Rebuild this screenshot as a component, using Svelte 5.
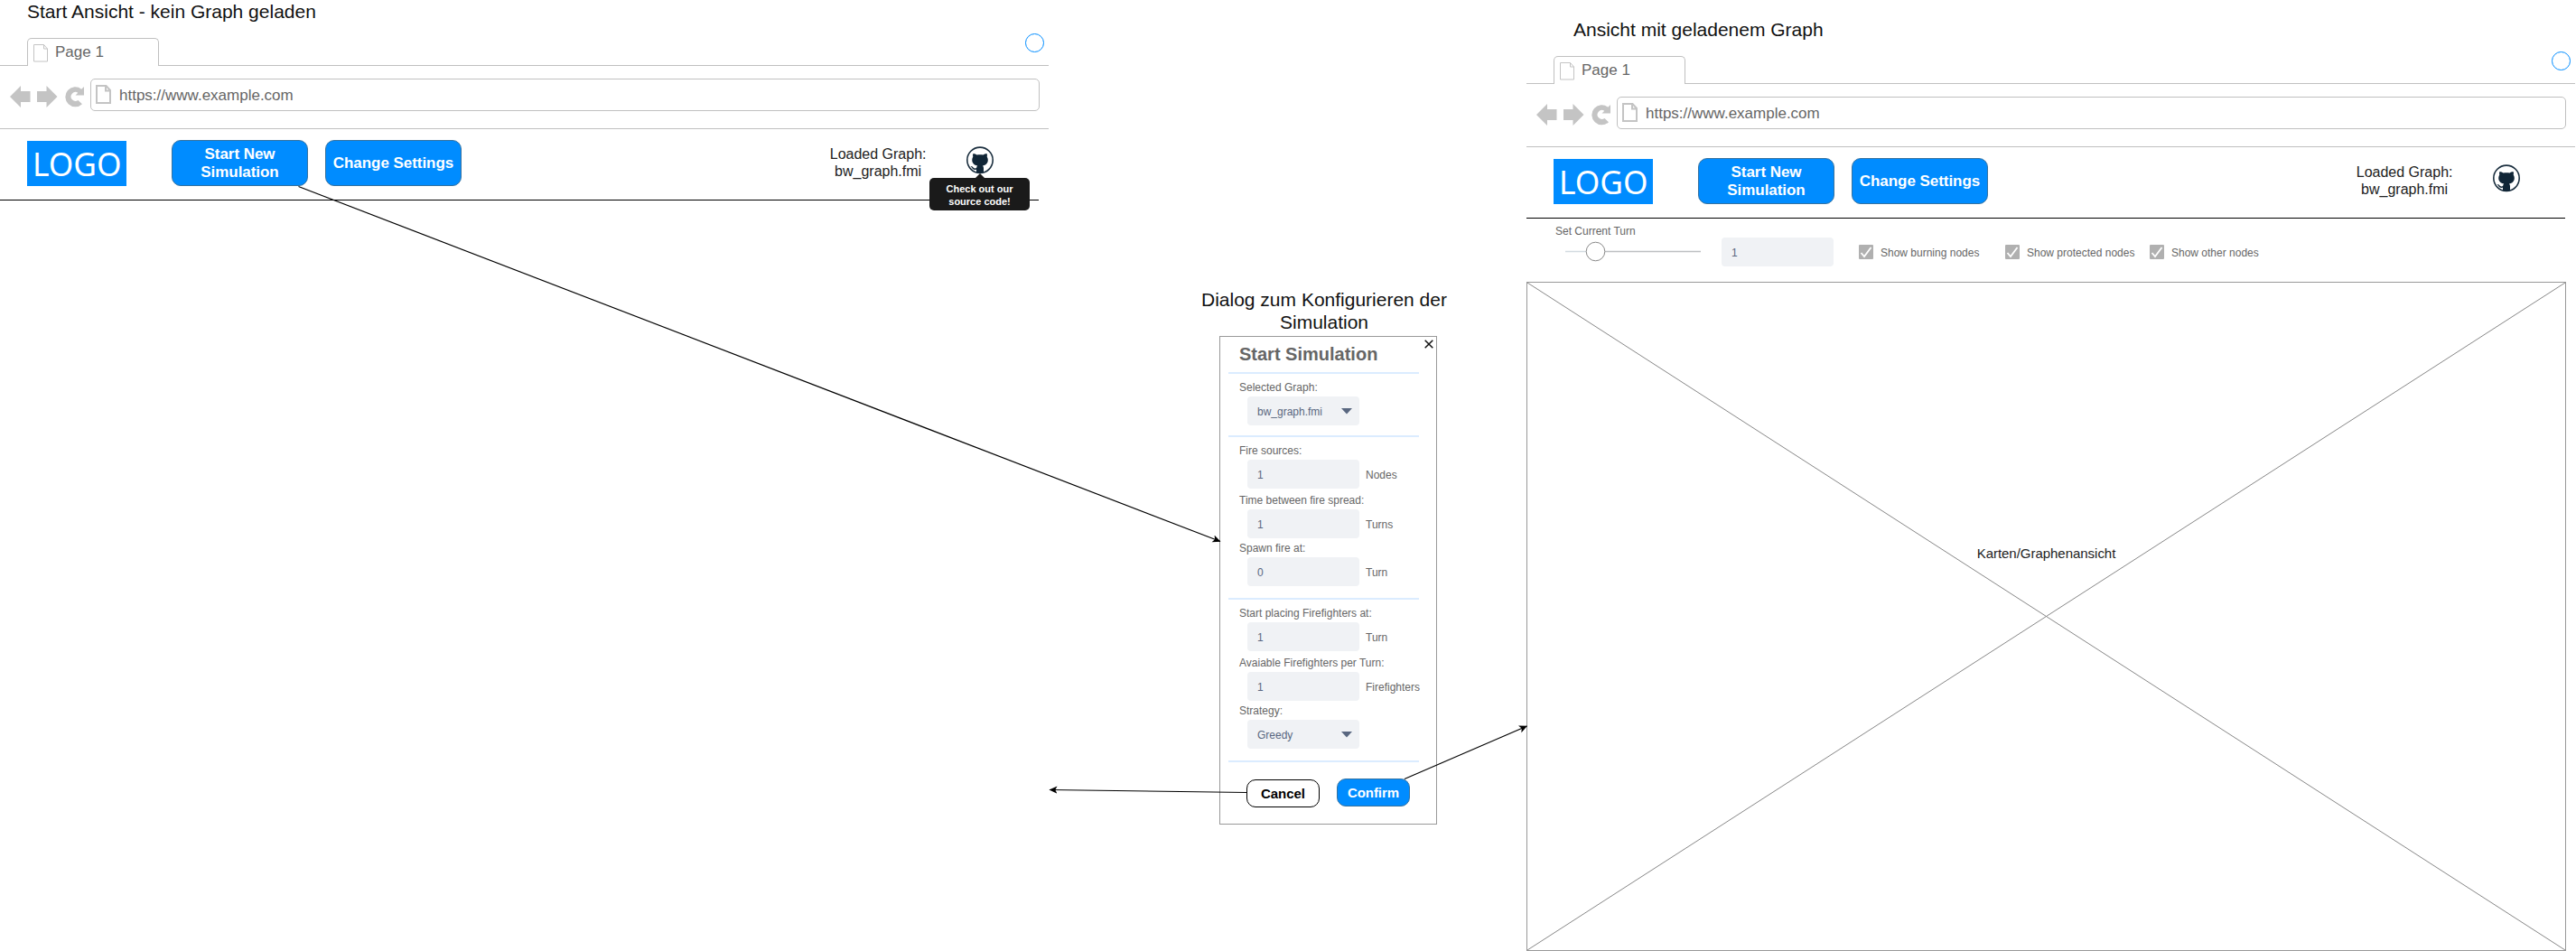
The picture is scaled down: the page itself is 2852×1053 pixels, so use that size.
<script>
  const fireRows = [
    { label: 'Fire sources:', value: '1', unit: 'Nodes', size: 'r55' },
    { label: 'Time between fire spread:', value: '1', unit: 'Turns', size: 'r53' },
    { label: 'Spawn fire at:', value: '0', unit: 'Turn', size: 'r53' }
  ];
  const fighterRows = [
    { label: 'Start placing Firefighters at:', value: '1', unit: 'Turn', size: 'r55' },
    { label: 'Avaiable Firefighters per Turn:', value: '1', unit: 'Firefighters', size: 'r53' }
  ];
  const checks = ['Show burning nodes', 'Show protected nodes', 'Show other nodes'];
</script>

{#snippet browser(title, tooltip)}
  <h1 class="title">{title}</h1>
  <div class="tabs">
    <div class="tab-lead"></div>
    <div class="tab">
      <svg width="17" height="20" viewBox="0 0 17 20"><path d="M.5.5h11l4 4.500v14h-15zM11.500.5v4.500h4" /></svg>
      <span>Page 1</span>
    </div>
    <div class="tab-rest"><i class="ring"></i></div>
  </div>
  <div class="address-row">
    <svg class="nav" width="84" height="26" viewBox="0 0 84 26">
      <path d="M0 13L12 1v6h10.500v12H12v6zM52.500 13L40.500 1v6H30v12h10.500v6z" />
      <path d="M82 2v9.500h-9.500l2.800-2.800a5 5 0 1 0 .2 8.300l4.500 4.200a11 11 0 1 1-.8-16.500z" />
    </svg>
    <div class="address">
      <svg width="18" height="22" viewBox="0 0 18 22"><path d="M1 1h10.500l4.500 5v14H1zM11 1v5.500h5" /></svg>
      <span>https://www.example.com</span>
    </div>
  </div>
  <header class="appbar">
    <div class="logo"><span>LOGO</span></div>
    <button class="action">Start New<br />Simulation</button>
    <button class="action second">Change Settings</button>
    <p class="loaded">Loaded Graph:<br />bw_graph.fmi</p>
    <div class="github">
      <svg width="30" height="31" viewBox="0 0 30 31">
        <circle cx="15" cy="15.300" r="14.200" fill="#fff" stroke="#1b2f3f" stroke-width="1.600" />
        <path fill="#102536" d="M7.500 8c1.500 0 3 .8 4 1.500 2.300-.5 4.700-.5 7 0 1-.7 2.500-1.500 4-1.500.6 1.300.5 2.600.2 3.600 2.500 4 .8 9.400-4.700 9.900.7.700 1 1.600 1 2.600v4.900a13 13 0 0 1-8 0v-3.200c-3 .5-4.300-.6-5-2-.4-.8-.9-1.400-1.600-1.800 1.800-.5 2.600.8 3.300 1.600.9 1 2.200 1 3.400.5.1-1.100.5-2 1.100-2.600-5.600-.5-7.300-5.900-4.900-9.900-.3-1-.4-2.300.2-3.600z" />
      </svg>
      {#if tooltip}<div class="tooltip">Check out our<br />source code!</div>{/if}
    </div>
  </header>
{/snippet}

{#snippet field(row)}
  <div class="row {row.size}">
    <label>{row.label}</label>
    <div class="line"><div class="input">{row.value}</div><span>{row.unit}</span></div>
  </div>
{/snippet}

{#snippet select(label, value)}
  <div class="row">
    <label>{label}</label>
    <div class="line">
      <div class="input select">{value}<svg width="12" height="7" viewBox="0 0 12 7"><path d="M0 0h12L6 6.500z" fill="#596780" /></svg></div>
    </div>
  </div>
{/snippet}

<main class="canvas">
  <section class="view start">{@render browser('Start Ansicht - kein Graph geladen', true)}</section>

  <section class="dialog-node">
    <h1 class="title">Dialog zum Konfigurieren der<br />Simulation</h1>
    <div class="dialog">
      <svg class="close" width="10" height="10" viewBox="0 0 10 10"><path d="M.7.7l8.600 8.600M9.300.7L.7 9.300" /></svg>
      <h2>Start Simulation</h2>
      <div class="group g1">{@render select('Selected Graph:', 'bw_graph.fmi')}</div>
      <div class="group g2">{#each fireRows as row}{@render field(row)}{/each}</div>
      <div class="group g3">
        {#each fighterRows as row}{@render field(row)}{/each}
        {@render select('Strategy:', 'Greedy')}
      </div>
      <div class="buttons">
        <button class="cancel">Cancel</button>
        <button class="confirm">Confirm</button>
      </div>
    </div>
  </section>

  <section class="view graph">
    {@render browser('Ansicht mit geladenem Graph', false)}
    <div class="controls">
      <div class="turn">
        <label>Set Current Turn</label>
        <svg width="151" height="24" viewBox="0 0 151 24">
          <path d="M0 12.500h34" stroke="#d3dbe0" stroke-width="1.500" />
          <path d="M34 12.500h116" stroke="#bdbfc1" stroke-width="1.500" />
          <circle cx="33.500" cy="12.500" r="10.300" fill="#fff" stroke="#888" />
        </svg>
      </div>
      <div class="input">1</div>
      <div class="checks">
        {#each checks as text}
          <div class="check">
            <svg width="16" height="16" viewBox="0 0 16 16"><rect width="16" height="16" rx="1" fill="#b0b0b0" /><path d="M2.500 9l3.500 4 7.500-10" fill="none" stroke="#fff" stroke-width="1.800" /></svg>
            <span>{text}</span>
          </div>
        {/each}
      </div>
    </div>
    <div class="map">
      <svg viewBox="0 0 1149 739" preserveAspectRatio="none"><path d="M0 0L1149 739M1149 0L0 739" /></svg>
      <span>Karten/Graphenansicht</span>
    </div>
  </section>

  <svg class="edges" width="2852" height="1053" viewBox="0 0 2852 1053">
    <defs>
      <marker id="arrow" markerUnits="userSpaceOnUse" markerWidth="10" markerHeight="10" refX="8.500" refY="4.500" orient="auto">
        <path d="M9 4.500L0 .3l2.200 4.200L0 8.700z" />
      </marker>
    </defs>
    <path d="M330.500 206.500L1351 599.500" />
    <path d="M1380.500 877.500L1162 874.500" />
    <path d="M1555 862.500L1690.500 804" />
  </svg>
</main>

<style>
  :global(body) { background: #fff; overflow: hidden; }
  .canvas { position: relative; width: 2852px; height: 1053px; overflow: hidden; font-family: "Liberation Sans", Arial, sans-serif; font-size: 12px; color: #666; }
  .canvas :is(h1, h2, p) { margin: 0; }
  button { font-family: inherit; padding: 0; box-sizing: border-box; flex: none; }
  svg { display: block; flex: none; }

  .view { position: absolute; display: flex; flex-direction: column; width: 1161px; }
  .start { left: 0; top: 0; }
  .graph { left: 1690px; top: 20px; }
  .title { font-size: 21px; line-height: 25px; font-weight: 400; color: #111; }
  .view .title { height: 42px; padding-left: 30px; box-sizing: border-box; }
  .graph .title { padding-left: 52px; }

  .tabs { display: flex; height: 31px; }
  .tab-lead { width: 30px; border-bottom: 1px solid #c0c0c0; }
  .tab { box-sizing: border-box; width: 146px; border: 1px solid #c0c0c0; border-bottom: 0; border-radius: 5px 5px 0 0; display: flex; align-items: center; padding-left: 6px; gap: 7px; font-size: 17px; }
  .tab svg { margin-top: 2px; }
  .tab path { fill: none; stroke: #c4c4c4; }
  .tab-rest { flex: 1; border-bottom: 1px solid #c0c0c0; display: flex; justify-content: flex-end; align-items: flex-start; padding: 0 5px 0 0; margin-top: -5px; }
  .ring { box-sizing: border-box; width: 21px; height: 21px; border: 1px solid #008cff; border-radius: 50%; }
  .address-row { box-sizing: border-box; height: 70px; border-bottom: 1px solid #c0c0c0; padding: 14px 10px 0 11px; display: flex; align-items: flex-start; gap: 5px; }
  .nav { margin-top: 7px; fill: #c4c4c4; }
  .address { box-sizing: border-box; flex: 1; height: 36px; border: 1px solid #c0c0c0; border-radius: 5px; display: flex; align-items: center; padding-left: 5px; gap: 8px; font-size: 17px; }
  .address span { padding-top: 1px; }
  .address path { fill: none; stroke: #c4c4c4; stroke-width: 2; }

  .appbar { box-sizing: border-box; width: 1150px; height: 79px; border-bottom: 1px solid #000; padding: 12px 50px 0 30px; display: flex; align-items: flex-start; }
  .logo { width: 110px; height: 50px; margin: 1px 50px 0 0; background: #008cff; color: #fff; font: 36px/52px "Noto Sans", sans-serif; display: flex; justify-content: center; }
  .logo span { transform: scaleX(.98); }
  .action { width: 151px; height: 51px; padding-top: 1px; border: 1px solid #36729f; border-radius: 10px; background: #008cff; color: #fff; font-weight: 700; font-size: 17px; line-height: 20px; letter-spacing: -.05px; white-space: nowrap; }
  .second { margin-left: 19px; }
  .canvas .loaded { margin: 6px 44.500px 0 auto; font-size: 16px; line-height: 19px; text-align: center; color: #222; }
  .github { position: relative; margin-top: 7px; }
  .tooltip { position: absolute; left: -41px; top: 35px; box-sizing: border-box; width: 111px; height: 36px; padding-top: 5px; border-radius: 5px; background: #1a1a1a; color: #fff; text-align: center; font-size: 11px; font-weight: 700; line-height: 14px; }
  .tooltip::before { content: ""; position: absolute; left: 50.500px; top: -5px; border: 5px solid transparent; border-top: 0; border-bottom-color: #1a1a1a; }

  .dialog-node { position: absolute; left: 1325px; top: 319px; width: 282px; display: flex; flex-direction: column; }
  .dialog-node .title { width: 282px; text-align: center; height: 53px; box-sizing: border-box; }
  .dialog { position: relative; box-sizing: border-box; width: 241px; height: 541px; margin-left: 25px; border: 1px solid #999; padding-left: 9px; }
  .close { position: absolute; right: 3px; top: 3px; stroke: #111; stroke-width: 1.500; }
  h2 { font-size: 20px; line-height: 38px; height: 39px; padding-left: 12px; }
  .group { box-sizing: border-box; width: 211px; border-top: 2px solid #dbecff; padding: 8px 0 0 12px; }
  .g1 { height: 70px; }
  .g2 { height: 180px; }
  .g3 { height: 180px; }
  .row { display: flex; flex-direction: column; white-space: nowrap; height: 53px; }
  .row label { height: 17px; line-height: 14px; }
  .r55 { height: 55px; }
  .line { display: flex; align-items: center; padding-left: 9px; gap: 7px; }
  .line span { padding-top: 1px; }
  .input { box-sizing: border-box; flex: none; width: 124px; height: 32px; border-radius: 4px; background: #f0f2f5; color: #596780; padding: 1px 8px 0 11px; display: flex; align-items: center; justify-content: space-between; }
  .select svg { margin-top: -1px; }
  .buttons { border-top: 2px solid #dbecff; width: 211px; box-sizing: border-box; padding: 18px 0 0 20px; display: flex; gap: 19px; }
  .buttons button { width: 81px; height: 31px; border-radius: 10px; font-size: 15px; font-weight: 700; letter-spacing: -.05px; }
  .buttons .cancel { background: #fff; border: 1px solid #000; color: #000; margin-top: 1px; }
  .confirm { background: #008cff; border: 1px solid #36729f; color: #fff; }

  .controls { height: 70px; display: flex; align-items: flex-start; padding-left: 32px; }
  .turn { width: 184px; padding-top: 7px; }
  .turn label { display: block; line-height: 14px; height: 17px; }
  .turn svg { margin-left: 11px; }
  .controls .input { margin-top: 21px; }
  .checks { display: flex; padding: 29px 0 0 28px; }
  .check { display: flex; align-items: center; height: 16px; gap: 8px; white-space: nowrap; }
  .check span { padding-top: 1px; }
  .check:nth-child(1) { width: 162px; }
  .check:nth-child(2) { width: 160px; }
  .map { position: relative; box-sizing: border-box; width: 1151px; height: 741px; border: 1px solid #999; text-align: center; }
  .map svg { width: 1149px; height: 739px; stroke: #888; }
  .map span { position: absolute; left: 0; right: 0; top: 291px; font-size: 15px; line-height: 18px; letter-spacing: -.03px; color: #222; }

  .edges { position: absolute; inset: 0; pointer-events: none; }
  .edges > path { stroke: #000; stroke-width: 1.200; fill: none; marker-end: url(#arrow); }
</style>
